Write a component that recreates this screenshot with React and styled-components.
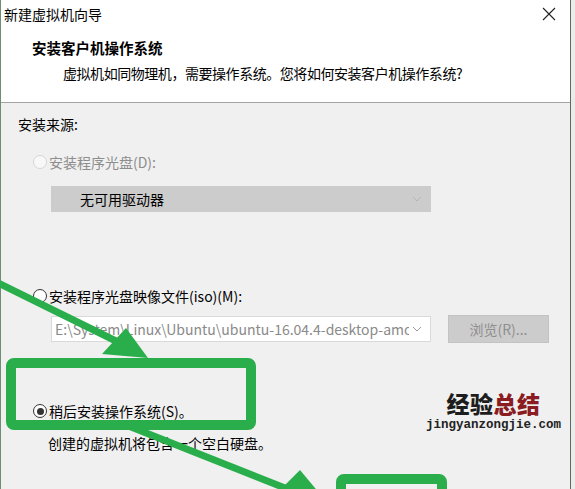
import React from 'react';
import styled, { createGlobalStyle } from 'styled-components';

const GlobalStyle = createGlobalStyle`
  html, body {
    margin: 0;
    padding: 0;
    background: #e9ece9;
  }
  body {
    font-family: "Noto Sans CJK SC", "Noto Sans", sans-serif;
    font-size: 14px;
    color: #000;
  }
`;

const Page = styled.div`
  position: relative;
  width: 575px;
  height: 489px;
  overflow: hidden;
`;

const Dialog = styled.div`
  width: 571px;
  height: 489px;
  box-sizing: border-box;
  border-left: 1px solid #6f8d72;
  border-right: 1px solid #5e6b5f;
  display: flex;
  flex-direction: column;
  background: #f0f0f0;
`;

const Header = styled.div`
  background: #fff;
  height: 102px;
  border-bottom: 1px solid #a3a3a3;
  display: flex;
  flex-direction: column;
`;

const TitleBar = styled.div`
  height: 28px;
  display: flex;
  align-items: center;
  justify-content: space-between;
  padding: 0 14px 0 3px;
  line-height: 20px;
`;

const Close = styled.span`
  display: flex;
  width: 14px;
  height: 14px;
`;

const Heading = styled.div`
  margin: 10px 0 0 31px;
  font-weight: 700;
  font-size: 14.5px;
  line-height: 20px;
`;

const Subtitle = styled.div`
  margin: 5px 0 0 62px;
  line-height: 20px;
  letter-spacing: -0.45px;
`;

const Body = styled.div`
  flex: 1;
  padding: 11px 0 0 17px;
  display: flex;
  flex-direction: column;
  align-items: flex-start;
`;

const Label = styled.div`
  line-height: 20px;
`;

const RadioRow = styled.label`
  display: flex;
  align-items: center;
  gap: 2px;
  margin-top: ${(p) => p.$top}px;
  padding-left: 15px;
  line-height: 20px;
  color: ${(p) => (p.$disabled ? '#8d8d8d' : '#000')};
`;

const Circle = styled.span`
  width: 12px;
  height: 12px;
  border-radius: 50%;
  border: 1px solid ${(p) => (p.$disabled ? '#d6d6d6' : '#333')};
  background: ${(p) => (p.$disabled ? '#f8f8f8' : '#fff')};
  display: flex;
  align-items: center;
  justify-content: center;

  &::after {
    content: '';
    display: ${(p) => (p.$checked ? 'block' : 'none')};
    width: 7px;
    height: 7px;
    border-radius: 50%;
    background: #333;
  }
`;

const Select = styled.div`
  width: 380px;
  height: 26px;
  box-sizing: border-box;
  margin: ${(p) => p.$top}px 0 0 33px;
  display: flex;
  align-items: center;
  justify-content: space-between;
  padding: 0 8px 0 ${(p) => (p.$empty ? 28 : 3)}px;
  background: ${(p) => (p.$empty ? '#cccccc' : '#fff')};
  border: 1px solid ${(p) => (p.$empty ? '#cccccc' : '#d9d9d9')};
  color: ${(p) => (p.$empty ? '#000' : '#8a8a8a')};
`;

const SelectText = styled.span`
  white-space: nowrap;
  overflow: hidden;
  width: ${(p) => p.$w}px;
`;

const Chevron = styled.svg`
  width: 10px;
  height: 6px;
  flex: none;
`;

const FileRow = styled.div`
  display: flex;
  align-items: center;
  gap: 17px;
  margin-top: 8px;
`;

const Browse = styled.div`
  width: 101px;
  height: 28px;
  box-sizing: border-box;
  margin-top: 1px;
  background: #cccccc;
  border: 1px solid #c3c3c3;
  color: #8f8f8f;
  display: flex;
  align-items: center;
  justify-content: center;
`;

const Note = styled.div`
  margin: 12px 0 0 30px;
  line-height: 20px;
`;

const Overlay = styled.svg`
  position: absolute;
  left: 0;
  top: 0;
  pointer-events: none;
`;

const Watermark = styled.div`
  position: absolute;
  left: 425px;
  top: 390px;
  display: flex;
  flex-direction: column;
  align-items: center;
  width: 137px;
`;

const WmTitle = styled.div`
  font-size: 23px;
  font-weight: 900;
  line-height: 27px;
  letter-spacing: 0.5px;
  color: #1d1d1d;
  span {
    color: #8a1c22;
  }
`;

const WmUrl = styled.div`
  font-family: "Liberation Mono", "DejaVu Sans Mono", monospace;
  font-weight: 700;
  font-size: 12.5px;
  line-height: 16px;
  color: #222;
`;

const ChevronIcon = ({ color }) => (
  <Chevron viewBox="0 0 10 6">
    <path d="M1 1 L5 5 L9 1" fill="none" stroke={color} strokeWidth="1" />
  </Chevron>
);

export default function App() {
  return (
    <>
      <GlobalStyle />
      <Page>
        <Dialog>
          <Header>
            <TitleBar>
              <span>新建虚拟机向导</span>
              <Close>
                <svg viewBox="0 0 14 14" width="14" height="14">
                  <path d="M1 1 L13 13 M13 1 L1 13" stroke="#222" strokeWidth="1.1" />
                </svg>
              </Close>
            </TitleBar>
            <Heading>安装客户机操作系统</Heading>
            <Subtitle>虚拟机如同物理机，需要操作系统。您将如何安装客户机操作系统?</Subtitle>
          </Header>
          <Body>
            <Label>安装来源:</Label>
            <RadioRow $top={18} $disabled>
              <Circle $disabled />
              安装程序光盘(D):
            </RadioRow>
            <Select $top={14} $empty>
              <span>无可用驱动器</span>
              <ChevronIcon color="#b5b5b5" />
            </Select>
            <RadioRow $top={74}>
              <Circle />
              安装程序光盘映像文件(iso)(M):
            </RadioRow>
            <FileRow>
              <Select $top={0}>
                <SelectText $w={354}>E:\System\Linux\Ubuntu\ubuntu-16.04.4-desktop-amd64.iso</SelectText>
                <ChevronIcon color="#9a9a9a" />
              </Select>
              <Browse>浏览(R)...</Browse>
            </FileRow>
            <RadioRow $top={58}>
              <Circle $checked />
              稍后安装操作系统(S)。
            </RadioRow>
            <Note>创建的虚拟机将包含一个空白硬盘。</Note>
          </Body>
        </Dialog>

        <Watermark>
          <WmTitle>
            经验<span>总结</span>
          </WmTitle>
          <WmUrl>jingyanzongjie.com</WmUrl>
        </Watermark>

        <Overlay width="575" height="489" viewBox="0 0 575 489">
          <g fill="#2aae4c" stroke="#2aae4c">
            <line x1="-6" y1="281" x2="118" y2="342" strokeWidth="7" />
            <polygon points="148,358 102,354 126,328" stroke="none" />
            <line x1="126" y1="425" x2="290" y2="490" strokeWidth="7" />
            <polygon points="335,512 278,492 300,470" stroke="none" />
          </g>
          <g fill="none" stroke="#2aae4c" strokeWidth="10">
            <rect x="11" y="363" width="240" height="62" rx="3" />
            <rect x="341" y="479" width="101" height="40" rx="3" />
          </g>
        </Overlay>
      </Page>
    </>
  );
}
